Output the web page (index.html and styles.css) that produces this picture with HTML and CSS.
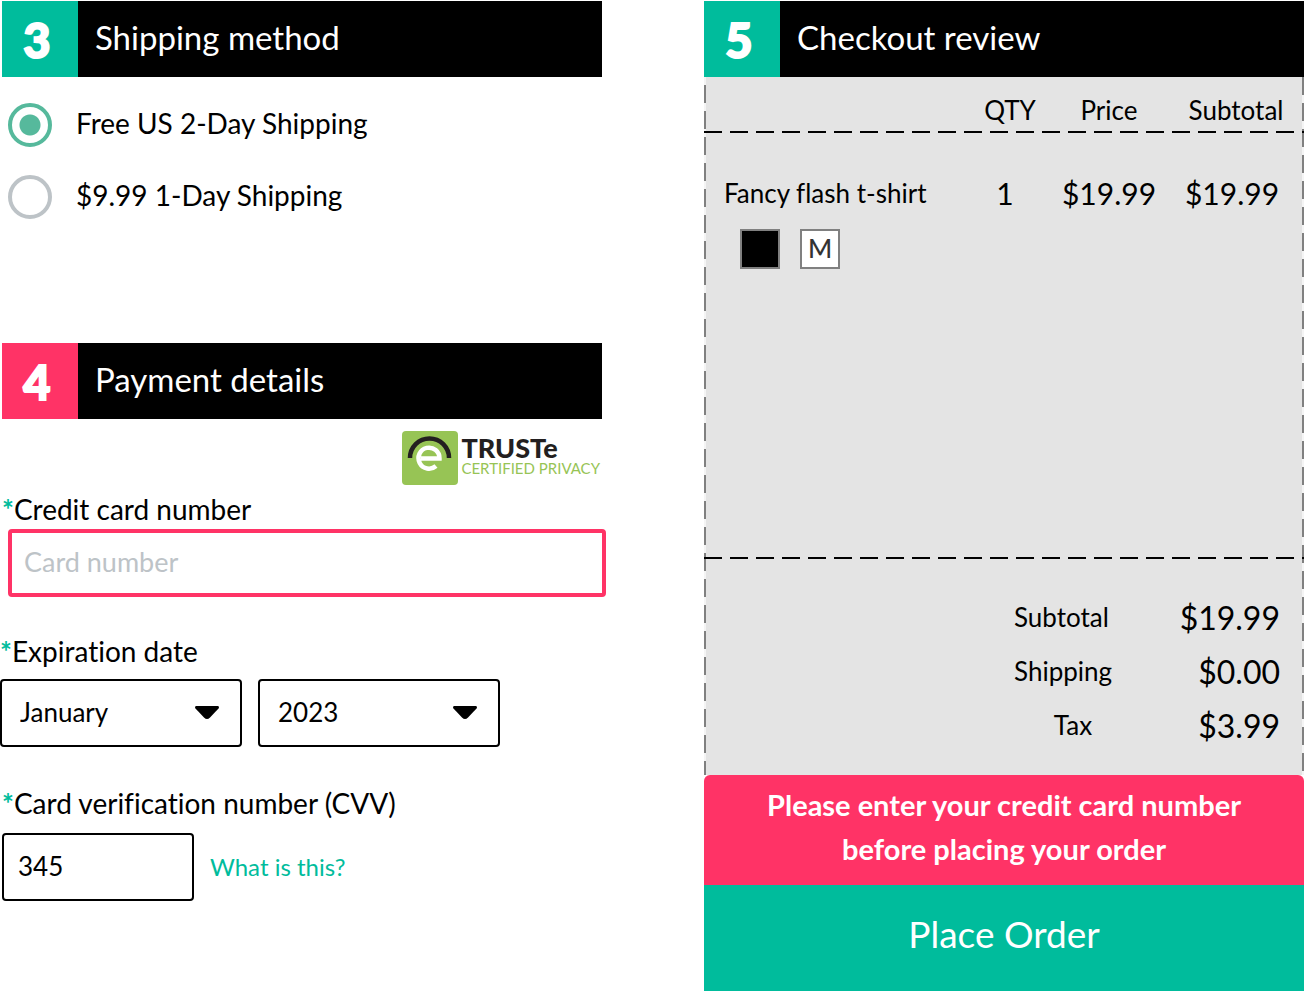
FILE: index.html
```html
<!DOCTYPE html>
<html lang="en">
<head>
<meta charset="utf-8">
<title>Checkout</title>
<link rel="stylesheet" href="styles.css">
</head>
<body>
<form class="checkout">
  <div class="column">
    <section class="shipping">
      <h2 class="step"><span class="step-number">3</span><span class="step-title">Shipping method</span></h2>
      <div class="choices">
        <label class="choice"><input class="radio" type="radio" name="shipping" checked><span class="choice-text">Free US 2-Day Shipping</span></label>
        <label class="choice"><input class="radio" type="radio" name="shipping"><span class="choice-text">$9.99 1-Day Shipping</span></label>
      </div>
    </section>

    <section class="payment">
      <h2 class="step step-error"><span class="step-number">4</span><span class="step-title">Payment details</span></h2>
      <div class="seal">
        <svg class="seal-logo" viewBox="0 0 56 54" width="56" height="54" aria-hidden="true">
          <rect width="56" height="54" rx="4" fill="#97c455"/>
          <path d="M8 27A19.500 19.500 0 0 1 47 27" fill="none" stroke="#231f20" stroke-width="4.500"/>
          <path d="M19 27.500H37.500A10.500 10.500 0 1 0 34 35" fill="none" stroke="#fff" stroke-width="4.500"/>
        </svg>
        <div class="seal-text">
          <span class="seal-name">TRUSTe</span>
          <span class="seal-note">CERTIFIED PRIVACY</span>
        </div>
      </div>

      <div class="field">
        <label class="label" for="card"><span class="required">*</span>Credit card number</label>
        <input class="box card" id="card" type="text" placeholder="Card number">
      </div>

      <div class="field expiry">
        <label class="label" for="month"><span class="required">*</span>Expiration date</label>
        <div class="row">
          <span class="picker">
            <select class="box select" id="month"><option>January</option></select>
            <svg class="caret" viewBox="0 0 24 14" width="24" height="14" aria-hidden="true"><path d="M1 0H23Q24 0 24 2L15 11.500Q12 14.500 9 11.500L0 2Q0 0 1 0Z"/></svg>
          </span>
          <span class="picker">
            <select class="box select" aria-label="Expiration year"><option>2023</option></select>
            <svg class="caret" viewBox="0 0 24 14" width="24" height="14" aria-hidden="true"><path d="M1 0H23Q24 0 24 2L15 11.500Q12 14.500 9 11.500L0 2Q0 0 1 0Z"/></svg>
          </span>
        </div>
      </div>

      <div class="field cvv-field">
        <label class="label" for="cvv"><span class="required">*</span>Card verification number (CVV)</label>
        <div class="row">
          <input class="box cvv" id="cvv" type="text" value="345">
          <a class="help" href="#cvv">What is this?</a>
        </div>
      </div>
    </section>
  </div>

  <section class="column review">
    <h2 class="step"><span class="step-number">5</span><span class="step-title">Checkout review</span></h2>
    <div class="receipt">
      <table class="items">
        <colgroup><col><col class="col-qty"><col class="col-price"><col class="col-subtotal"></colgroup>
        <thead>
          <tr><th aria-label="Item"></th><th>QTY</th><th>Price</th><th>Subtotal</th></tr>
        </thead>
        <tbody>
          <tr>
            <td class="item-name">Fancy flash t-shirt</td>
            <td class="item-qty">1</td>
            <td class="amount">$19.99</td>
            <td class="amount">$19.99</td>
          </tr>
        </tbody>
      </table>
      <div class="options">
        <span class="option option-color" role="img" aria-label="Black"></span>
        <span class="option">M</span>
      </div>
      <dl class="totals">
        <dt>Subtotal</dt><dd>$19.99</dd>
        <dt>Shipping</dt><dd>$0.00</dd>
        <dt class="tax">Tax</dt><dd>$3.99</dd>
      </dl>
    </div>
    <p class="alert">Please enter your credit card number<br>before placing your order</p>
    <button class="submit" type="button">Place Order</button>
  </section>
</form>
</body>
</html>
```

FILE: styles.css
```css
:root {
  --teal: #00bc9c;
  --pink: #ff3366;
  --dash: 18px;
  --gap: 8px;
  --period: 26px;
}

* { box-sizing: border-box; }

body {
  margin: 0;
  background: #fff;
  color: #000;
  font-family: Lato, "Liberation Sans", sans-serif;
  font-size: 28px;
  font-variant-ligatures: none;
  line-height: 36px;
}

input, select, button { font: inherit; color: inherit; }

.checkout {
  display: grid;
  grid-template-columns: 1fr 1fr;
  column-gap: 102px;
  min-height: 100vh;
  padding: 1px 2px 4px;
}

.column { min-width: 0; }

.step {
  display: flex;
  align-items: center;
  height: 76px;
  margin: 0;
  background: #000;
  color: #fff;
  font-size: 33px;
  font-weight: 400;
}

.step-number {
  flex: none;
  width: 76px;
  padding: 2px 6px 0 0;
  background: var(--teal);
  font-size: 47px;
  font-weight: 900;
  line-height: 74px;
  text-align: center;
  -webkit-text-stroke: 2px #fff;
}

.step-error .step-number { background: var(--pink); }
.step-title { padding: 0 17px 4px; }

.choices {
  display: grid;
  gap: 28px;
  padding: 26px 6px 0;
}

.choice {
  display: flex;
  align-items: center;
  gap: 24px;
  height: 44px;
}

.choice-text { padding-bottom: 4px; }

.radio {
  appearance: none;
  flex: none;
  width: 44px;
  height: 44px;
  margin: 0;
  border: 4px solid #bdc3c7;
  border-radius: 50%;
}

.radio:checked {
  border-color: #56b99c;
  background: radial-gradient(circle, #56b99c 10px, transparent 11px);
}

.payment { margin-top: 124px; }

.seal {
  display: flex;
  justify-content: flex-end;
  gap: 3px;
  padding: 12px 2px 0 0;
}

.seal-text { display: grid; align-content: start; padding-top: 4px; }
.seal-name { color: #231f20; font-size: 27px; font-weight: 900; line-height: 26px; }
.seal-note { color: #97c455; font-size: 15px; line-height: 14px; }

.label { display: block; }
.required { color: var(--teal); font-weight: 700; }

.box {
  display: block;
  height: 68px;
  padding: 0 14px 2px;
  border: 2px solid #000;
  border-radius: 4px;
  background: #fff;
  font-size: 26px;
}

.field { padding-top: 6px; }

.card {
  width: calc(100% - 2px);
  margin: 2px 0 0 6px;
  padding: 0 12px 4px;
  border: 4px solid var(--pink);
  font-size: 27px;
}

.card::placeholder { color: #bdc3c7; opacity: 1; }

.expiry { margin-left: -2px; padding-top: 36px; }
.expiry .row { gap: 16px; padding-top: 10px; }
.row { display: flex; align-items: center; gap: 16px; }
.picker { display: grid; width: 242px; }

.select {
  grid-area: 1 / 1;
  appearance: none;
  width: 100%;
  padding: 0 18px 2px;
}

.caret {
  grid-area: 1 / 1;
  place-self: center end;
  margin-right: 23px;
  pointer-events: none;
}

.cvv-field { padding-top: 38px; }
.cvv-field .row { padding-top: 12px; }
.cvv { width: 192px; }
.help { color: var(--teal); font-size: 24px; text-decoration: none; }

.review { display: flex; flex-direction: column; }

.receipt {
  flex: 1;
  display: flex;
  flex-direction: column;
  background:
    repeating-linear-gradient(to bottom, #f4f4f4 0 var(--gap), #808080 var(--gap) var(--period)) 0 0 / 2px 100% no-repeat,
    repeating-linear-gradient(to bottom, #808080 0 var(--dash), #f4f4f4 var(--dash) var(--period)) 100% 0 / 2px 100% no-repeat,
    #e4e4e4;
}

.items {
  width: 100%;
  border-spacing: 0;
  table-layout: fixed;
}

.col-qty { width: 80px; }
.col-price { width: 118px; }
.col-subtotal { width: 136px; }

.items th, .items td { padding: 0; font-weight: 400; text-align: center; }
.items th { height: 56px; padding-top: 10px; font-size: 26px; }

.items thead, .totals {
  background: repeating-linear-gradient(to right, #000 0 var(--dash), transparent var(--dash) var(--period)) 0 100% / 100% 2px no-repeat;
}

.items tbody td { padding-top: 42px; }
.items .item-name { padding-left: 20px; font-size: 26px; text-align: left; }
.items .item-qty { padding-right: 10px; font-size: 30px; }
.items .amount { font-size: 30px; }
.items .amount:last-child { padding-right: 8px; }

.options { display: flex; gap: 20px; padding: 18px 36px; }

.option {
  width: 40px;
  height: 40px;
  border: 2px solid #808080;
  background: #fff;
  color: #333;
  font-size: 26px;
  font-weight: 500;
  line-height: 34px;
  text-align: center;
}

.option-color { background: #000; }

.totals {
  display: grid;
  grid-template-columns: 118px 1fr;
  row-gap: 18px;
  margin: auto 0 0;
  padding: 43px 24px 31px 310px;
  background-position: 0 0;
}

.totals dt { font-size: 26px; line-height: 34px; }
.totals .tax { text-align: center; }
.totals dd { margin: 0; font-size: 32px; text-align: right; }

.alert {
  margin: 0;
  padding: 8px 0 14px;
  border-radius: 6px 6px 0 0;
  background: var(--pink);
  color: #fff;
  font-size: 29px;
  font-weight: 700;
  line-height: 44px;
  text-align: center;
}

.submit {
  height: 106px;
  padding: 0 0 8px;
  border: 0;
  background: var(--teal);
  color: #fff;
  font-size: 37px;
}
```
